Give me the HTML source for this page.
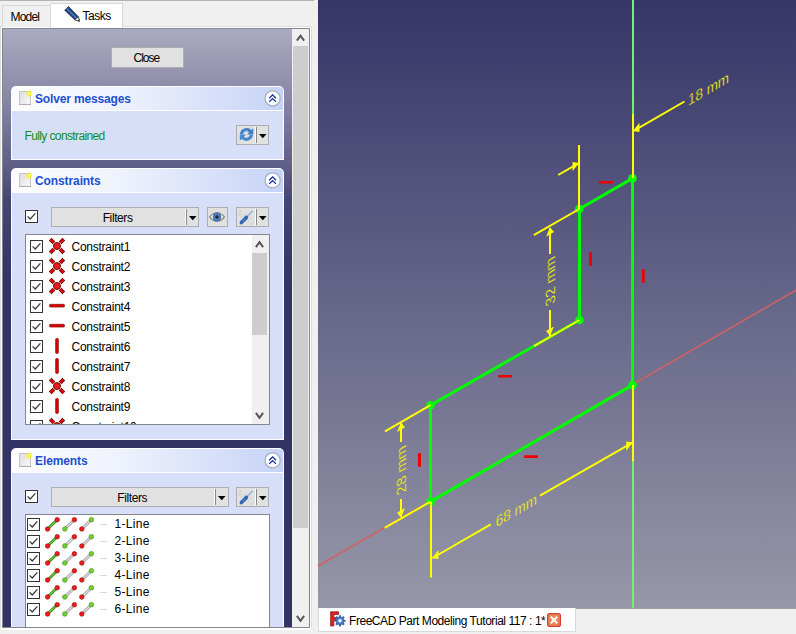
<!DOCTYPE html><html><head><meta charset="utf-8"><style>
*{box-sizing:border-box}
html,body{margin:0;padding:0}
body{width:796px;height:634px;background:#f0f0f0;position:relative;overflow:hidden;font-family:"Liberation Sans",sans-serif;font-size:12px;color:#000}
.a{position:absolute}
.t{position:absolute;white-space:nowrap;line-height:14px;height:14px}
.btn{position:absolute;background:#e1e1e1;border:1px solid #adadad}
svg{position:absolute;overflow:visible}
</style></head><body>
<div class="a" style="left:0;top:0;width:314px;height:1px;background:#b4b4b4"></div>
<div class="a" style="left:0;top:26px;width:312px;height:605px;background:#fff;border:1px solid #dedede"></div>
<div class="a" style="left:2px;top:28px;width:308px;height:600px;border:1px solid #828790"></div>
<div class="a" style="left:3px;top:29px;width:289px;height:598px;background:linear-gradient(180deg,#aaaac0 0px,#8c8caa 60px,#5f5f87 136px,#464673 171px,#373768 231px,#333366 260px,#333366 100%)"></div>
<div class="a" style="left:2px;top:5px;width:49px;height:22px;background:#f0f0f0;border:1px solid #d9d9d9;border-bottom:none"></div>
<div class="t" style="left:10.5px;top:10px;letter-spacing:-0.8px;">Model</div>
<div class="a" style="left:50px;top:3px;width:73px;height:25px;background:#fff;border:1px solid #d9d9d9;border-bottom:none"></div>
<div class="t" style="left:82.5px;top:9px;letter-spacing:-0.5px;">Tasks</div>
<svg style="left:60px;top:4px" width="24" height="20" viewBox="0 0 24 20"><path d="M4.7 6.3 L8.5 2.4 L18.5 12.9 L19.4 17.2 L14.8 15.8 Z" fill="#21437d" stroke="#102040" stroke-width="0.7"/><path d="M6.6 4.4 L16.6 14.4" stroke="#4f86cf" stroke-width="1.3"/><path d="M14.8 15.8 L18.5 12.9 L19.4 17.2 Z" fill="#fafafa" stroke="#333" stroke-width="0.6"/><path d="M17.8 16.7 L19.4 17.2 L19 15.4 Z" fill="#111"/></svg>
<div class="a" style="left:292px;top:29px;width:17px;height:598px;background:#f0f0f0"></div>
<div class="a" style="left:293px;top:46px;width:15px;height:482px;background:#cdcdcd"></div>
<svg style="left:0;top:0" width="1" height="1"><path d="M296.9 40.6 L300.5 35.6 L304.1 40.6" stroke="#555555" stroke-width="2" fill="none"/></svg>
<svg style="left:0;top:0" width="1" height="1"><path d="M296.9 615.9 L300.5 620.9 L304.1 615.9" stroke="#555555" stroke-width="2" fill="none"/></svg>
<div class="btn" style="left:111px;top:47px;width:73px;height:21px"></div>
<div class="t" style="left:133.5px;top:51px;letter-spacing:-1.0px;">Close</div>
<div class="a" style="left:11px;top:86px;width:273px;height:74px;background:#fff;border-radius:5px 5px 0 0"></div>
<div class="a" style="left:12px;top:87px;width:271px;height:23px;border-radius:4px 4px 0 0;background:linear-gradient(90deg,#fdfdff 0%,#eef2fc 40%,#c6d3f6 100%)"></div>
<div class="a" style="left:12px;top:111px;width:271px;height:48px;background:#d6dff7"></div>
<svg style="left:19px;top:91px" width="16" height="16" viewBox="0 0 16 16"><defs><linearGradient id="dg" x1="0" y1="0" x2="1" y2="1"><stop offset="0" stop-color="#dcdcdc"/><stop offset="1" stop-color="#fafafa"/></linearGradient><radialGradient id="yg"><stop offset="0" stop-color="#ffffd0"/><stop offset="0.45" stop-color="#f4f020"/><stop offset="1" stop-color="#f4f020" stop-opacity="0"/></radialGradient></defs><rect x="0.5" y="0.5" width="11" height="13" fill="url(#dg)" stroke="#c6c6c6" stroke-width="1"/><rect x="0" y="12.9" width="12" height="1.1" fill="#b0b0b0"/><circle cx="10.1" cy="2.6" r="3.6" fill="url(#yg)"/></svg>
<div class="t" style="left:35px;top:92px;letter-spacing:-0.15px;font-weight:bold;color:#1c50d0">Solver messages</div>
<svg style="left:263px;top:89px" width="19" height="19" viewBox="0 0 19 19"><g transform="translate(0.60,0.40)"><circle cx="9" cy="9" r="7.6" fill="#fff" stroke="#a9aec6" stroke-width="1.3"/><path d="M5.6 8.8 L9 5.5 L12.4 8.8 M5.6 12.5 L9 9.2 L12.4 12.5" stroke="#0b2a9c" stroke-width="1.3" fill="none"/></g></svg>
<div class="t" style="left:24.5px;top:128.5px;letter-spacing:-0.62px;color:#138a1e">Fully constrained</div>
<div class="btn" style="left:236px;top:125px;width:33px;height:20px"></div>
<div class="a" style="left:255px;top:127px;width:1px;height:16px;background:#fff"></div>
<div class="a" style="left:256px;top:127px;width:1px;height:16px;background:#8a8a8a"></div>
<svg style="left:258.8px;top:134px" width="8" height="5"><path d="M0 0 L7.5 0 L3.75 4.2 Z" fill="#000"/></svg>
<svg style="left:239px;top:127px" width="15" height="15" viewBox="0 0 15 15"><path d="M2.6 7.2 A4.9 4.6 0 0 1 11.4 4.6" stroke="#3d7cc9" stroke-width="3.2" fill="none"/><path d="M14.2 1.2 L14.2 7.6 L8 7.6 Z" fill="#3d7cc9"/><path d="M12.4 7.8 A4.9 4.6 0 0 1 3.6 10.4" stroke="#4a88d0" stroke-width="3.2" fill="none"/><path d="M0.8 13.8 L0.8 7.4 L7 7.4 Z" fill="#4a88d0"/><path d="M4 6 A3.5 3.2 0 0 1 9 4" stroke="#8fbbe8" stroke-width="0.8" fill="none"/></svg>
<div class="a" style="left:11px;top:168px;width:273px;height:272px;background:#fff;border-radius:5px 5px 0 0"></div>
<div class="a" style="left:12px;top:169px;width:271px;height:23px;border-radius:4px 4px 0 0;background:linear-gradient(90deg,#fdfdff 0%,#eef2fc 40%,#c6d3f6 100%)"></div>
<div class="a" style="left:12px;top:193px;width:271px;height:246px;background:#d6dff7"></div>
<svg style="left:19px;top:173px" width="16" height="16" viewBox="0 0 16 16"><defs><linearGradient id="dg" x1="0" y1="0" x2="1" y2="1"><stop offset="0" stop-color="#dcdcdc"/><stop offset="1" stop-color="#fafafa"/></linearGradient><radialGradient id="yg"><stop offset="0" stop-color="#ffffd0"/><stop offset="0.45" stop-color="#f4f020"/><stop offset="1" stop-color="#f4f020" stop-opacity="0"/></radialGradient></defs><rect x="0.5" y="0.5" width="11" height="13" fill="url(#dg)" stroke="#c6c6c6" stroke-width="1"/><rect x="0" y="12.9" width="12" height="1.1" fill="#b0b0b0"/><circle cx="10.1" cy="2.6" r="3.6" fill="url(#yg)"/></svg>
<div class="t" style="left:35px;top:174px;letter-spacing:-0.1px;font-weight:bold;color:#1c50d0">Constraints</div>
<svg style="left:263px;top:171px" width="19" height="19" viewBox="0 0 19 19"><g transform="translate(0.60,0.40)"><circle cx="9" cy="9" r="7.6" fill="#fff" stroke="#a9aec6" stroke-width="1.3"/><path d="M5.6 8.8 L9 5.5 L12.4 8.8 M5.6 12.5 L9 9.2 L12.4 12.5" stroke="#0b2a9c" stroke-width="1.3" fill="none"/></g></svg>
<svg style="left:25px;top:210px" width="13" height="13" viewBox="0 0 13 13"><rect x="0.5" y="0.5" width="12" height="12" fill="#fff" stroke="#333333" stroke-width="1"/><path d="M2.6 6.4 L5.2 9 L10.4 3.4" stroke="#3a3a3a" stroke-width="1.3" fill="none"/></svg>
<div class="btn" style="left:51px;top:207px;width:148px;height:20px"></div>
<div class="t" style="left:102.7px;top:211px;letter-spacing:-0.4px;">Filters</div>
<div class="a" style="left:185px;top:209px;width:1px;height:16px;background:#fff"></div>
<div class="a" style="left:186px;top:209px;width:1px;height:16px;background:#8a8a8a"></div>
<svg style="left:188.8px;top:215.5px" width="8" height="5"><path d="M0 0 L7.5 0 L3.75 4.2 Z" fill="#000"/></svg>
<div class="btn" style="left:207px;top:207px;width:21px;height:20px"></div>
<svg style="left:208px;top:209px" width="18" height="16" viewBox="0 0 18 16"><path d="M1.6 8 Q9 -0.8 16.4 8 Q9 16.8 1.6 8 Z" fill="#fafafa" stroke="#8c8c8c" stroke-width="1.3"/><circle cx="9" cy="8" r="4" fill="#4a7fc6" stroke="#2f5f9f" stroke-width="0.6"/><circle cx="9" cy="8" r="1.7" fill="#2a2a2a"/></svg>
<div class="btn" style="left:236px;top:207px;width:33px;height:20px"></div>
<div class="a" style="left:255px;top:209px;width:1px;height:16px;background:#fff"></div>
<div class="a" style="left:256px;top:209px;width:1px;height:16px;background:#8a8a8a"></div>
<svg style="left:258.8px;top:215.5px" width="8" height="5"><path d="M0 0 L7.5 0 L3.75 4.2 Z" fill="#000"/></svg>
<svg style="left:239px;top:209px" width="16" height="16" viewBox="0 0 16 16"><path d="M5.4 6.2 L13.2 14" stroke="#c9c9c9" stroke-width="2.6" stroke-linecap="round"/><path d="M5.4 6.2 L13.2 14" stroke="#f4f4f4" stroke-width="1.1" stroke-linecap="round"/><path d="M2.2 1.8 A2.8 2.8 0 1 0 6 5.6" stroke="#c4c4c4" stroke-width="2.2" fill="none"/><path d="M2.2 1.8 A2.8 2.8 0 1 0 6 5.6" stroke="#f2f2f2" stroke-width="0.9" fill="none"/><path d="M13.2 2.4 L7.6 8" stroke="#9fb5d2" stroke-width="1.7" stroke-linecap="round"/><path d="M7.4 8.4 L2.4 13.6" stroke="#2f65b5" stroke-width="3.6" stroke-linecap="round"/><path d="M3.4 12.2 L5.6 10" stroke="#7ea6de" stroke-width="0.9"/></svg>
<div class="a" style="left:25px;top:234px;width:245px;height:191px;background:#fff;border:1px solid #828790;overflow:hidden">
<div class="a" style="left:226px;top:0;width:17px;height:189px;background:#f0f0f0"></div>
<div class="a" style="left:226px;top:18px;width:15px;height:82px;background:#cdcdcd"></div>
</div>
<svg style="left:0;top:0" width="1" height="1"><path d="M255.9 247.2 L259.5 242.2 L263.1 247.2" stroke="#555555" stroke-width="2" fill="none"/></svg>
<svg style="left:0;top:0" width="1" height="1"><path d="M255.9 412.9 L259.5 417.9 L263.1 412.9" stroke="#555555" stroke-width="2" fill="none"/></svg>
<div class="a" style="left:26px;top:235px;width:226px;height:189px;overflow:hidden">
<svg style="left:4px;top:5px" width="13" height="13" viewBox="0 0 13 13"><rect x="0.5" y="0.5" width="12" height="12" fill="#fff" stroke="#333" stroke-width="1"/><path d="M2.6 6.4 L5.2 9 L10.4 3.4" stroke="#3a3a3a" stroke-width="1.3" fill="none"/></svg>
<svg style="left:23px;top:3px" width="16" height="16" viewBox="0 0 16 16"><g stroke="#6a0a0a" stroke-width="3.8"><path d="M1.2 1.2 L4.9 4.9 M14.8 1.2 L11.1 4.9 M1.2 14.8 L4.9 11.1 M14.8 14.8 L11.1 11.1" /></g><g stroke="#dd0a0a" stroke-width="2.6"><path d="M1.5 1.5 L4.6 4.6 M14.5 1.5 L11.4 4.6 M1.5 14.5 L4.6 11.4 M14.5 14.5 L11.4 11.4" /></g><circle cx="8" cy="8" r="3.5" fill="#e81c1c" stroke="#5a0808" stroke-width="0.9"/></svg>
<div class="t" style="left:45.5px;top:5px;letter-spacing:-0.25px">Constraint1</div>
<svg style="left:4px;top:25px" width="13" height="13" viewBox="0 0 13 13"><rect x="0.5" y="0.5" width="12" height="12" fill="#fff" stroke="#333" stroke-width="1"/><path d="M2.6 6.4 L5.2 9 L10.4 3.4" stroke="#3a3a3a" stroke-width="1.3" fill="none"/></svg>
<svg style="left:23px;top:23px" width="16" height="16" viewBox="0 0 16 16"><g stroke="#6a0a0a" stroke-width="3.8"><path d="M1.2 1.2 L4.9 4.9 M14.8 1.2 L11.1 4.9 M1.2 14.8 L4.9 11.1 M14.8 14.8 L11.1 11.1" /></g><g stroke="#dd0a0a" stroke-width="2.6"><path d="M1.5 1.5 L4.6 4.6 M14.5 1.5 L11.4 4.6 M1.5 14.5 L4.6 11.4 M14.5 14.5 L11.4 11.4" /></g><circle cx="8" cy="8" r="3.5" fill="#e81c1c" stroke="#5a0808" stroke-width="0.9"/></svg>
<div class="t" style="left:45.5px;top:25px;letter-spacing:-0.25px">Constraint2</div>
<svg style="left:4px;top:45px" width="13" height="13" viewBox="0 0 13 13"><rect x="0.5" y="0.5" width="12" height="12" fill="#fff" stroke="#333" stroke-width="1"/><path d="M2.6 6.4 L5.2 9 L10.4 3.4" stroke="#3a3a3a" stroke-width="1.3" fill="none"/></svg>
<svg style="left:23px;top:43px" width="16" height="16" viewBox="0 0 16 16"><g stroke="#6a0a0a" stroke-width="3.8"><path d="M1.2 1.2 L4.9 4.9 M14.8 1.2 L11.1 4.9 M1.2 14.8 L4.9 11.1 M14.8 14.8 L11.1 11.1" /></g><g stroke="#dd0a0a" stroke-width="2.6"><path d="M1.5 1.5 L4.6 4.6 M14.5 1.5 L11.4 4.6 M1.5 14.5 L4.6 11.4 M14.5 14.5 L11.4 11.4" /></g><circle cx="8" cy="8" r="3.5" fill="#e81c1c" stroke="#5a0808" stroke-width="0.9"/></svg>
<div class="t" style="left:45.5px;top:45px;letter-spacing:-0.25px">Constraint3</div>
<svg style="left:4px;top:65px" width="13" height="13" viewBox="0 0 13 13"><rect x="0.5" y="0.5" width="12" height="12" fill="#fff" stroke="#333" stroke-width="1"/><path d="M2.6 6.4 L5.2 9 L10.4 3.4" stroke="#3a3a3a" stroke-width="1.3" fill="none"/></svg>
<svg style="left:23px;top:63px" width="16" height="16" viewBox="0 0 16 16"><rect x="0.5" y="6.3" width="15" height="2.8" rx="1" fill="#e00000" stroke="#700" stroke-width="0.6"/></svg>
<div class="t" style="left:45.5px;top:65px;letter-spacing:-0.25px">Constraint4</div>
<svg style="left:4px;top:85px" width="13" height="13" viewBox="0 0 13 13"><rect x="0.5" y="0.5" width="12" height="12" fill="#fff" stroke="#333" stroke-width="1"/><path d="M2.6 6.4 L5.2 9 L10.4 3.4" stroke="#3a3a3a" stroke-width="1.3" fill="none"/></svg>
<svg style="left:23px;top:83px" width="16" height="16" viewBox="0 0 16 16"><rect x="0.5" y="6.3" width="15" height="2.8" rx="1" fill="#e00000" stroke="#700" stroke-width="0.6"/></svg>
<div class="t" style="left:45.5px;top:85px;letter-spacing:-0.25px">Constraint5</div>
<svg style="left:4px;top:105px" width="13" height="13" viewBox="0 0 13 13"><rect x="0.5" y="0.5" width="12" height="12" fill="#fff" stroke="#333" stroke-width="1"/><path d="M2.6 6.4 L5.2 9 L10.4 3.4" stroke="#3a3a3a" stroke-width="1.3" fill="none"/></svg>
<svg style="left:23px;top:103px" width="16" height="16" viewBox="0 0 16 16"><rect x="6.6" y="0.4" width="2.8" height="15" rx="1" fill="#e00000" stroke="#700" stroke-width="0.6"/></svg>
<div class="t" style="left:45.5px;top:105px;letter-spacing:-0.25px">Constraint6</div>
<svg style="left:4px;top:125px" width="13" height="13" viewBox="0 0 13 13"><rect x="0.5" y="0.5" width="12" height="12" fill="#fff" stroke="#333" stroke-width="1"/><path d="M2.6 6.4 L5.2 9 L10.4 3.4" stroke="#3a3a3a" stroke-width="1.3" fill="none"/></svg>
<svg style="left:23px;top:123px" width="16" height="16" viewBox="0 0 16 16"><rect x="6.6" y="0.4" width="2.8" height="15" rx="1" fill="#e00000" stroke="#700" stroke-width="0.6"/></svg>
<div class="t" style="left:45.5px;top:125px;letter-spacing:-0.25px">Constraint7</div>
<svg style="left:4px;top:145px" width="13" height="13" viewBox="0 0 13 13"><rect x="0.5" y="0.5" width="12" height="12" fill="#fff" stroke="#333" stroke-width="1"/><path d="M2.6 6.4 L5.2 9 L10.4 3.4" stroke="#3a3a3a" stroke-width="1.3" fill="none"/></svg>
<svg style="left:23px;top:143px" width="16" height="16" viewBox="0 0 16 16"><g stroke="#6a0a0a" stroke-width="3.8"><path d="M1.2 1.2 L4.9 4.9 M14.8 1.2 L11.1 4.9 M1.2 14.8 L4.9 11.1 M14.8 14.8 L11.1 11.1" /></g><g stroke="#dd0a0a" stroke-width="2.6"><path d="M1.5 1.5 L4.6 4.6 M14.5 1.5 L11.4 4.6 M1.5 14.5 L4.6 11.4 M14.5 14.5 L11.4 11.4" /></g><circle cx="8" cy="8" r="3.5" fill="#e81c1c" stroke="#5a0808" stroke-width="0.9"/></svg>
<div class="t" style="left:45.5px;top:145px;letter-spacing:-0.25px">Constraint8</div>
<svg style="left:4px;top:165px" width="13" height="13" viewBox="0 0 13 13"><rect x="0.5" y="0.5" width="12" height="12" fill="#fff" stroke="#333" stroke-width="1"/><path d="M2.6 6.4 L5.2 9 L10.4 3.4" stroke="#3a3a3a" stroke-width="1.3" fill="none"/></svg>
<svg style="left:23px;top:163px" width="16" height="16" viewBox="0 0 16 16"><rect x="6.6" y="0.4" width="2.8" height="15" rx="1" fill="#e00000" stroke="#700" stroke-width="0.6"/></svg>
<div class="t" style="left:45.5px;top:165px;letter-spacing:-0.25px">Constraint9</div>
<svg style="left:4px;top:185px" width="13" height="13" viewBox="0 0 13 13"><rect x="0.5" y="0.5" width="12" height="12" fill="#fff" stroke="#333" stroke-width="1"/><path d="M2.6 6.4 L5.2 9 L10.4 3.4" stroke="#3a3a3a" stroke-width="1.3" fill="none"/></svg>
<svg style="left:23px;top:183px" width="16" height="16" viewBox="0 0 16 16"><g stroke="#6a0a0a" stroke-width="3.8"><path d="M1.2 1.2 L4.9 4.9 M14.8 1.2 L11.1 4.9 M1.2 14.8 L4.9 11.1 M14.8 14.8 L11.1 11.1" /></g><g stroke="#dd0a0a" stroke-width="2.6"><path d="M1.5 1.5 L4.6 4.6 M14.5 1.5 L11.4 4.6 M1.5 14.5 L4.6 11.4 M14.5 14.5 L11.4 11.4" /></g><circle cx="8" cy="8" r="3.5" fill="#e81c1c" stroke="#5a0808" stroke-width="0.9"/></svg>
<div class="t" style="left:45.5px;top:185px;letter-spacing:-0.25px">Constraint10</div>
</div>
<div class="a" style="left:11px;top:448px;width:273px;height:200px;background:#fff;border-radius:5px 5px 0 0"></div>
<div class="a" style="left:12px;top:449px;width:271px;height:23px;border-radius:4px 4px 0 0;background:linear-gradient(90deg,#fdfdff 0%,#eef2fc 40%,#c6d3f6 100%)"></div>
<div class="a" style="left:12px;top:473px;width:271px;height:174px;background:#d6dff7"></div>
<svg style="left:19px;top:453px" width="16" height="16" viewBox="0 0 16 16"><defs><linearGradient id="dg" x1="0" y1="0" x2="1" y2="1"><stop offset="0" stop-color="#dcdcdc"/><stop offset="1" stop-color="#fafafa"/></linearGradient><radialGradient id="yg"><stop offset="0" stop-color="#ffffd0"/><stop offset="0.45" stop-color="#f4f020"/><stop offset="1" stop-color="#f4f020" stop-opacity="0"/></radialGradient></defs><rect x="0.5" y="0.5" width="11" height="13" fill="url(#dg)" stroke="#c6c6c6" stroke-width="1"/><rect x="0" y="12.9" width="12" height="1.1" fill="#b0b0b0"/><circle cx="10.1" cy="2.6" r="3.6" fill="url(#yg)"/></svg>
<div class="t" style="left:35px;top:454px;letter-spacing:-0.1px;font-weight:bold;color:#1c50d0">Elements</div>
<svg style="left:263px;top:451px" width="19" height="19" viewBox="0 0 19 19"><g transform="translate(0.60,0.40)"><circle cx="9" cy="9" r="7.6" fill="#fff" stroke="#a9aec6" stroke-width="1.3"/><path d="M5.6 8.8 L9 5.5 L12.4 8.8 M5.6 12.5 L9 9.2 L12.4 12.5" stroke="#0b2a9c" stroke-width="1.3" fill="none"/></g></svg>
<svg style="left:25px;top:490px" width="13" height="13" viewBox="0 0 13 13"><rect x="0.5" y="0.5" width="12" height="12" fill="#fff" stroke="#333333" stroke-width="1"/><path d="M2.6 6.4 L5.2 9 L10.4 3.4" stroke="#3a3a3a" stroke-width="1.3" fill="none"/></svg>
<div class="btn" style="left:51px;top:487px;width:178px;height:20px"></div>
<div class="t" style="left:117.3px;top:491px;letter-spacing:-0.4px;">Filters</div>
<div class="a" style="left:214px;top:489px;width:1px;height:16px;background:#fff"></div>
<div class="a" style="left:215px;top:489px;width:1px;height:16px;background:#8a8a8a"></div>
<svg style="left:217.8px;top:495.5px" width="8" height="5"><path d="M0 0 L7.5 0 L3.75 4.2 Z" fill="#000"/></svg>
<div class="btn" style="left:236px;top:487px;width:33px;height:20px"></div>
<div class="a" style="left:255px;top:489px;width:1px;height:16px;background:#fff"></div>
<div class="a" style="left:256px;top:489px;width:1px;height:16px;background:#8a8a8a"></div>
<svg style="left:258.8px;top:495.5px" width="8" height="5"><path d="M0 0 L7.5 0 L3.75 4.2 Z" fill="#000"/></svg>
<svg style="left:239px;top:489px" width="16" height="16" viewBox="0 0 16 16"><path d="M5.4 6.2 L13.2 14" stroke="#c9c9c9" stroke-width="2.6" stroke-linecap="round"/><path d="M5.4 6.2 L13.2 14" stroke="#f4f4f4" stroke-width="1.1" stroke-linecap="round"/><path d="M2.2 1.8 A2.8 2.8 0 1 0 6 5.6" stroke="#c4c4c4" stroke-width="2.2" fill="none"/><path d="M2.2 1.8 A2.8 2.8 0 1 0 6 5.6" stroke="#f2f2f2" stroke-width="0.9" fill="none"/><path d="M13.2 2.4 L7.6 8" stroke="#9fb5d2" stroke-width="1.7" stroke-linecap="round"/><path d="M7.4 8.4 L2.4 13.6" stroke="#2f65b5" stroke-width="3.6" stroke-linecap="round"/><path d="M3.4 12.2 L5.6 10" stroke="#7ea6de" stroke-width="0.9"/></svg>
<div class="a" style="left:25px;top:514px;width:245px;height:130px;background:#fff;border:1px solid #828790"></div>
<svg style="left:27px;top:518px" width="13" height="13" viewBox="0 0 13 13"><rect x="0.5" y="0.5" width="12" height="12" fill="#fff" stroke="#333333" stroke-width="1"/><path d="M2.6 6.4 L5.2 9 L10.4 3.4" stroke="#3a3a3a" stroke-width="1.3" fill="none"/></svg>
<svg style="left:0;top:0" width="1" height="1"><path d="M47.6 529 L57.2 519.7" stroke="#2a7a10" stroke-width="2.6"/><path d="M47.6 529 L57.2 519.7" stroke="#6cc83a" stroke-width="1.4"/><circle cx="47.6" cy="529" r="2.3" fill="#ec1c1c" stroke="#a00808" stroke-width="0.6"/><circle cx="57.2" cy="519.7" r="2.3" fill="#ec1c1c" stroke="#a00808" stroke-width="0.6"/></svg>
<svg style="left:0;top:0" width="1" height="1"><path d="M64.8 529 L74.4 519.7" stroke="#8a8a8a" stroke-width="2.6"/><path d="M64.8 529 L74.4 519.7" stroke="#e8e8e8" stroke-width="1.2"/><circle cx="64.8" cy="529" r="2.3" fill="#72d030" stroke="#3f8a12" stroke-width="0.6"/><circle cx="74.4" cy="519.7" r="2.3" fill="#ec1c1c" stroke="#a00808" stroke-width="0.6"/></svg>
<svg style="left:0;top:0" width="1" height="1"><path d="M81.8 529 L91.4 519.7" stroke="#8a8a8a" stroke-width="2.6"/><path d="M81.8 529 L91.4 519.7" stroke="#e8e8e8" stroke-width="1.2"/><circle cx="81.8" cy="529" r="2.3" fill="#ec1c1c" stroke="#a00808" stroke-width="0.6"/><circle cx="91.4" cy="519.7" r="2.3" fill="#72d030" stroke="#3f8a12" stroke-width="0.6"/></svg>
<div class="a" style="left:100px;top:524px;width:7px;height:1px;background:#d8d8d8"></div>
<div class="t" style="left:114.6px;top:517px;letter-spacing:0.3px;">1-Line</div>
<svg style="left:27px;top:535px" width="13" height="13" viewBox="0 0 13 13"><rect x="0.5" y="0.5" width="12" height="12" fill="#fff" stroke="#333333" stroke-width="1"/><path d="M2.6 6.4 L5.2 9 L10.4 3.4" stroke="#3a3a3a" stroke-width="1.3" fill="none"/></svg>
<svg style="left:0;top:0" width="1" height="1"><path d="M47.6 546 L57.2 536.7" stroke="#2a7a10" stroke-width="2.6"/><path d="M47.6 546 L57.2 536.7" stroke="#6cc83a" stroke-width="1.4"/><circle cx="47.6" cy="546" r="2.3" fill="#ec1c1c" stroke="#a00808" stroke-width="0.6"/><circle cx="57.2" cy="536.7" r="2.3" fill="#ec1c1c" stroke="#a00808" stroke-width="0.6"/></svg>
<svg style="left:0;top:0" width="1" height="1"><path d="M64.8 546 L74.4 536.7" stroke="#8a8a8a" stroke-width="2.6"/><path d="M64.8 546 L74.4 536.7" stroke="#e8e8e8" stroke-width="1.2"/><circle cx="64.8" cy="546" r="2.3" fill="#72d030" stroke="#3f8a12" stroke-width="0.6"/><circle cx="74.4" cy="536.7" r="2.3" fill="#ec1c1c" stroke="#a00808" stroke-width="0.6"/></svg>
<svg style="left:0;top:0" width="1" height="1"><path d="M81.8 546 L91.4 536.7" stroke="#8a8a8a" stroke-width="2.6"/><path d="M81.8 546 L91.4 536.7" stroke="#e8e8e8" stroke-width="1.2"/><circle cx="81.8" cy="546" r="2.3" fill="#ec1c1c" stroke="#a00808" stroke-width="0.6"/><circle cx="91.4" cy="536.7" r="2.3" fill="#72d030" stroke="#3f8a12" stroke-width="0.6"/></svg>
<div class="a" style="left:100px;top:541px;width:7px;height:1px;background:#d8d8d8"></div>
<div class="t" style="left:114.6px;top:534px;letter-spacing:0.3px;">2-Line</div>
<svg style="left:27px;top:552px" width="13" height="13" viewBox="0 0 13 13"><rect x="0.5" y="0.5" width="12" height="12" fill="#fff" stroke="#333333" stroke-width="1"/><path d="M2.6 6.4 L5.2 9 L10.4 3.4" stroke="#3a3a3a" stroke-width="1.3" fill="none"/></svg>
<svg style="left:0;top:0" width="1" height="1"><path d="M47.6 563 L57.2 553.7" stroke="#2a7a10" stroke-width="2.6"/><path d="M47.6 563 L57.2 553.7" stroke="#6cc83a" stroke-width="1.4"/><circle cx="47.6" cy="563" r="2.3" fill="#ec1c1c" stroke="#a00808" stroke-width="0.6"/><circle cx="57.2" cy="553.7" r="2.3" fill="#ec1c1c" stroke="#a00808" stroke-width="0.6"/></svg>
<svg style="left:0;top:0" width="1" height="1"><path d="M64.8 563 L74.4 553.7" stroke="#8a8a8a" stroke-width="2.6"/><path d="M64.8 563 L74.4 553.7" stroke="#e8e8e8" stroke-width="1.2"/><circle cx="64.8" cy="563" r="2.3" fill="#72d030" stroke="#3f8a12" stroke-width="0.6"/><circle cx="74.4" cy="553.7" r="2.3" fill="#ec1c1c" stroke="#a00808" stroke-width="0.6"/></svg>
<svg style="left:0;top:0" width="1" height="1"><path d="M81.8 563 L91.4 553.7" stroke="#8a8a8a" stroke-width="2.6"/><path d="M81.8 563 L91.4 553.7" stroke="#e8e8e8" stroke-width="1.2"/><circle cx="81.8" cy="563" r="2.3" fill="#ec1c1c" stroke="#a00808" stroke-width="0.6"/><circle cx="91.4" cy="553.7" r="2.3" fill="#72d030" stroke="#3f8a12" stroke-width="0.6"/></svg>
<div class="a" style="left:100px;top:558px;width:7px;height:1px;background:#d8d8d8"></div>
<div class="t" style="left:114.6px;top:551px;letter-spacing:0.3px;">3-Line</div>
<svg style="left:27px;top:569px" width="13" height="13" viewBox="0 0 13 13"><rect x="0.5" y="0.5" width="12" height="12" fill="#fff" stroke="#333333" stroke-width="1"/><path d="M2.6 6.4 L5.2 9 L10.4 3.4" stroke="#3a3a3a" stroke-width="1.3" fill="none"/></svg>
<svg style="left:0;top:0" width="1" height="1"><path d="M47.6 580 L57.2 570.7" stroke="#2a7a10" stroke-width="2.6"/><path d="M47.6 580 L57.2 570.7" stroke="#6cc83a" stroke-width="1.4"/><circle cx="47.6" cy="580" r="2.3" fill="#ec1c1c" stroke="#a00808" stroke-width="0.6"/><circle cx="57.2" cy="570.7" r="2.3" fill="#ec1c1c" stroke="#a00808" stroke-width="0.6"/></svg>
<svg style="left:0;top:0" width="1" height="1"><path d="M64.8 580 L74.4 570.7" stroke="#8a8a8a" stroke-width="2.6"/><path d="M64.8 580 L74.4 570.7" stroke="#e8e8e8" stroke-width="1.2"/><circle cx="64.8" cy="580" r="2.3" fill="#72d030" stroke="#3f8a12" stroke-width="0.6"/><circle cx="74.4" cy="570.7" r="2.3" fill="#ec1c1c" stroke="#a00808" stroke-width="0.6"/></svg>
<svg style="left:0;top:0" width="1" height="1"><path d="M81.8 580 L91.4 570.7" stroke="#8a8a8a" stroke-width="2.6"/><path d="M81.8 580 L91.4 570.7" stroke="#e8e8e8" stroke-width="1.2"/><circle cx="81.8" cy="580" r="2.3" fill="#ec1c1c" stroke="#a00808" stroke-width="0.6"/><circle cx="91.4" cy="570.7" r="2.3" fill="#72d030" stroke="#3f8a12" stroke-width="0.6"/></svg>
<div class="a" style="left:100px;top:575px;width:7px;height:1px;background:#d8d8d8"></div>
<div class="t" style="left:114.6px;top:568px;letter-spacing:0.3px;">4-Line</div>
<svg style="left:27px;top:586px" width="13" height="13" viewBox="0 0 13 13"><rect x="0.5" y="0.5" width="12" height="12" fill="#fff" stroke="#333333" stroke-width="1"/><path d="M2.6 6.4 L5.2 9 L10.4 3.4" stroke="#3a3a3a" stroke-width="1.3" fill="none"/></svg>
<svg style="left:0;top:0" width="1" height="1"><path d="M47.6 597 L57.2 587.7" stroke="#2a7a10" stroke-width="2.6"/><path d="M47.6 597 L57.2 587.7" stroke="#6cc83a" stroke-width="1.4"/><circle cx="47.6" cy="597" r="2.3" fill="#ec1c1c" stroke="#a00808" stroke-width="0.6"/><circle cx="57.2" cy="587.7" r="2.3" fill="#ec1c1c" stroke="#a00808" stroke-width="0.6"/></svg>
<svg style="left:0;top:0" width="1" height="1"><path d="M64.8 597 L74.4 587.7" stroke="#8a8a8a" stroke-width="2.6"/><path d="M64.8 597 L74.4 587.7" stroke="#e8e8e8" stroke-width="1.2"/><circle cx="64.8" cy="597" r="2.3" fill="#72d030" stroke="#3f8a12" stroke-width="0.6"/><circle cx="74.4" cy="587.7" r="2.3" fill="#ec1c1c" stroke="#a00808" stroke-width="0.6"/></svg>
<svg style="left:0;top:0" width="1" height="1"><path d="M81.8 597 L91.4 587.7" stroke="#8a8a8a" stroke-width="2.6"/><path d="M81.8 597 L91.4 587.7" stroke="#e8e8e8" stroke-width="1.2"/><circle cx="81.8" cy="597" r="2.3" fill="#ec1c1c" stroke="#a00808" stroke-width="0.6"/><circle cx="91.4" cy="587.7" r="2.3" fill="#72d030" stroke="#3f8a12" stroke-width="0.6"/></svg>
<div class="a" style="left:100px;top:592px;width:7px;height:1px;background:#d8d8d8"></div>
<div class="t" style="left:114.6px;top:585px;letter-spacing:0.3px;">5-Line</div>
<svg style="left:27px;top:603px" width="13" height="13" viewBox="0 0 13 13"><rect x="0.5" y="0.5" width="12" height="12" fill="#fff" stroke="#333333" stroke-width="1"/><path d="M2.6 6.4 L5.2 9 L10.4 3.4" stroke="#3a3a3a" stroke-width="1.3" fill="none"/></svg>
<svg style="left:0;top:0" width="1" height="1"><path d="M47.6 614 L57.2 604.7" stroke="#2a7a10" stroke-width="2.6"/><path d="M47.6 614 L57.2 604.7" stroke="#6cc83a" stroke-width="1.4"/><circle cx="47.6" cy="614" r="2.3" fill="#ec1c1c" stroke="#a00808" stroke-width="0.6"/><circle cx="57.2" cy="604.7" r="2.3" fill="#ec1c1c" stroke="#a00808" stroke-width="0.6"/></svg>
<svg style="left:0;top:0" width="1" height="1"><path d="M64.8 614 L74.4 604.7" stroke="#8a8a8a" stroke-width="2.6"/><path d="M64.8 614 L74.4 604.7" stroke="#e8e8e8" stroke-width="1.2"/><circle cx="64.8" cy="614" r="2.3" fill="#72d030" stroke="#3f8a12" stroke-width="0.6"/><circle cx="74.4" cy="604.7" r="2.3" fill="#ec1c1c" stroke="#a00808" stroke-width="0.6"/></svg>
<svg style="left:0;top:0" width="1" height="1"><path d="M81.8 614 L91.4 604.7" stroke="#8a8a8a" stroke-width="2.6"/><path d="M81.8 614 L91.4 604.7" stroke="#e8e8e8" stroke-width="1.2"/><circle cx="81.8" cy="614" r="2.3" fill="#ec1c1c" stroke="#a00808" stroke-width="0.6"/><circle cx="91.4" cy="604.7" r="2.3" fill="#72d030" stroke="#3f8a12" stroke-width="0.6"/></svg>
<div class="a" style="left:100px;top:609px;width:7px;height:1px;background:#d8d8d8"></div>
<div class="t" style="left:114.6px;top:602px;letter-spacing:0.3px;">6-Line</div>
<div class="a" style="left:3px;top:627px;width:306px;height:1px;background:#828790"></div>
<div class="a" style="left:0px;top:628px;width:312px;height:6px;background:#f0f0f0"></div>
<div class="a" style="left:2px;top:627px;width:308px;height:1px;background:#828790"></div>
<div class="a" style="left:1px;top:628px;width:310px;height:2px;background:#fff"></div>
<svg style="left:318px;top:0" width="478" height="608" viewBox="318 0 478 608">
<defs><linearGradient id="bg" x1="0" y1="0" x2="0" y2="1"><stop offset="0" stop-color="#353568"/><stop offset="1" stop-color="#9797a9"/></linearGradient></defs>
<rect x="318" y="0" width="478" height="608" fill="url(#bg)"/>
<path d="M318 566 L796 290.2" stroke="#d26262" stroke-width="1.6" fill="none"/>
<rect x="632" y="0" width="2" height="608" fill="#74f074"/>
<path d="M632.5 178.4 L579.3 209.0" stroke="#00ff00" stroke-width="3" fill="none"/>
<path d="M579.5 320.0 L430.5 405.2" stroke="#00ff00" stroke-width="3" fill="none"/>
<path d="M430.5 501.6 L632.5 385.1" stroke="#00ff00" stroke-width="3" fill="none"/>
<rect x="631" y="178.4" width="3" height="206.70000000000002" fill="#00ff00"/>
<rect x="578" y="209.0" width="3" height="111.0" fill="#00ff00"/>
<rect x="429" y="405.2" width="3" height="96.40000000000003" fill="#00ff00"/>
<circle cx="632.5" cy="178.4" r="4.3" fill="#00ff00"/>
<circle cx="579.3" cy="209.0" r="4.3" fill="#00ff00"/>
<circle cx="579.5" cy="320.0" r="4.3" fill="#00ff00"/>
<circle cx="430.5" cy="405.2" r="4.3" fill="#00ff00"/>
<circle cx="430.5" cy="501.6" r="4.3" fill="#00ff00"/>
<circle cx="632.5" cy="385.1" r="4.3" fill="#00ff00"/>
<rect x="632" y="114" width="2" height="64.4" fill="#ffff00"/>
<rect x="578" y="145" width="2" height="64.0" fill="#ffff00"/>
<rect x="632" y="385.1" width="2" height="75.89999999999998" fill="#ffff00"/>
<rect x="430" y="501.6" width="2" height="75.89999999999998" fill="#ffff00"/>
<path d="M579.3 209.0 L533.8 235.16118800461362" stroke="#ffff00" stroke-width="2" fill="none"/>
<path d="M579.5 320.0 L534.0 346.1611880046136" stroke="#ffff00" stroke-width="2" fill="none"/>
<path d="M430.5 405.2 L385.0 431.3611880046136" stroke="#ffff00" stroke-width="2" fill="none"/>
<path d="M430.5 501.6 L384.7 527.9336793540946" stroke="#ffff00" stroke-width="2" fill="none"/>
<path d="M558.2 175.0 L578 163.6" stroke="#ffff00" stroke-width="2" fill="none"/>
<path d="M579 163.0 L572.5842 162.0889 L572.5842 171.28889999999998 Z" fill="#ffff00"/>
<path d="M684.5 101.5 L634 130.6" stroke="#ffff00" stroke-width="2" fill="none"/>
<path d="M633 131.0 L639.4158 122.7111 L639.4158 131.9111 Z" fill="#ffff00"/>
<rect x="549" y="228" width="2" height="26" fill="#ffff00"/>
<rect x="549" y="310" width="2" height="26" fill="#ffff00"/>
<path d="M550 227.2 L546.0118 236.6931 L553.9882 232.10689999999997 Z" fill="#ffff00"/>
<path d="M550 336.0 L546.0118 331.0931 L553.9882 326.50690000000003 Z" fill="#ffff00"/>
<rect x="400" y="423" width="2" height="19" fill="#ffff00"/>
<rect x="400" y="499" width="2" height="18" fill="#ffff00"/>
<path d="M401 422.4 L397.0118 431.89309999999995 L404.9882 427.3069 Z" fill="#ffff00"/>
<path d="M401 517.6 L397.0118 512.6931000000001 L404.9882 508.10690000000005 Z" fill="#ffff00"/>
<path d="M432.5 558 L490.8 524.4" stroke="#ffff00" stroke-width="2" fill="none"/>
<path d="M540 495.6 L632 442.8" stroke="#ffff00" stroke-width="2" fill="none"/>
<path d="M432 558.2 L438.4158 549.9111 L438.4158 559.1111000000001 Z" fill="#ffff00"/>
<path d="M632.6 442.5 L626.1842 441.58889999999997 L626.1842 450.7889 Z" fill="#ffff00"/>
<text transform="matrix(0.867,-0.4985,0,1,688.0,106.0)" font-family="Liberation Sans" font-size="15.5" fill="#ffff00" stroke="#424270" stroke-width="0.3" style="paint-order:normal">18 mm</text>
<text transform="matrix(0.867,-0.4985,0,1,495.8,527.4)" font-family="Liberation Sans" font-size="15.5" fill="#ffff00" stroke="#82829c" stroke-width="0.3" style="paint-order:normal">68 mm</text>
<text transform="matrix(0,-1,0.867,-0.4985,555.0,302.4)" font-family="Liberation Sans" font-size="15.5" fill="#ffff00" stroke="#5f5f86" stroke-width="0.3" style="paint-order:normal">32 mm</text>
<text transform="matrix(0,-1,0.867,-0.4985,406.2,491.4)" font-family="Liberation Sans" font-size="15.5" fill="#ffff00" stroke="#7a7a97" stroke-width="0.3" style="paint-order:normal">28 mm</text>
<rect x="599" y="181" width="14" height="2.6" rx="1" fill="#ee0000"/>
<rect x="589" y="252" width="3" height="14" rx="1" fill="#ee0000"/>
<rect x="642" y="269" width="2.7" height="14" rx="1" fill="#ee0000"/>
<rect x="498" y="375" width="14" height="2.6" rx="1" fill="#ee0000"/>
<rect x="418" y="453" width="3" height="14" rx="1" fill="#ee0000"/>
<rect x="524" y="455.3" width="14" height="2.6" rx="1" fill="#ee0000"/>
</svg>
<div class="a" style="left:318px;top:608px;width:478px;height:1px;background:#a0a0a8"></div>
<div class="a" style="left:318px;top:608px;width:258px;height:24px;background:#fff;border:1px solid #d9d9d9;border-top:none"></div>
<svg style="left:329px;top:610px" width="20" height="18" viewBox="0 0 20 18"><path d="M1.6 1.8 L9.6 1.8 L9.6 4.6 L4.8 4.6 L4.8 7.4 L8.6 7.4 L8.6 10 L4.8 10 L4.8 16 L1.6 16 Z" fill="#e81e1e" stroke="#7a1010" stroke-width="0.7"/><g transform="translate(11,10.8)"><path d="M0 -5.6 L0 5.6 M-5.6 0 L5.6 0 M-4 -4 L4 4 M-4 4 L4 -4" stroke="#3b69ad" stroke-width="2.1"/><circle r="3.9" fill="#4d82c8" stroke="#2f5a9a" stroke-width="0.6"/><circle r="1.7" fill="#fff"/></g></svg>
<div class="t" style="left:349px;top:614px;letter-spacing:-0.45px">FreeCAD Part Modeling Tutorial 117 : 1*</div>
<svg style="left:547px;top:613px" width="14" height="14" viewBox="0 0 14 14"><rect x="0.6" y="0.6" width="12.8" height="12.8" rx="2" fill="#e8845a" stroke="#d8402a" stroke-width="1.2"/><path d="M3.8 3.8 L10.2 10.2 M10.2 3.8 L3.8 10.2" stroke="#fff" stroke-width="2"/></svg>
</body></html>
